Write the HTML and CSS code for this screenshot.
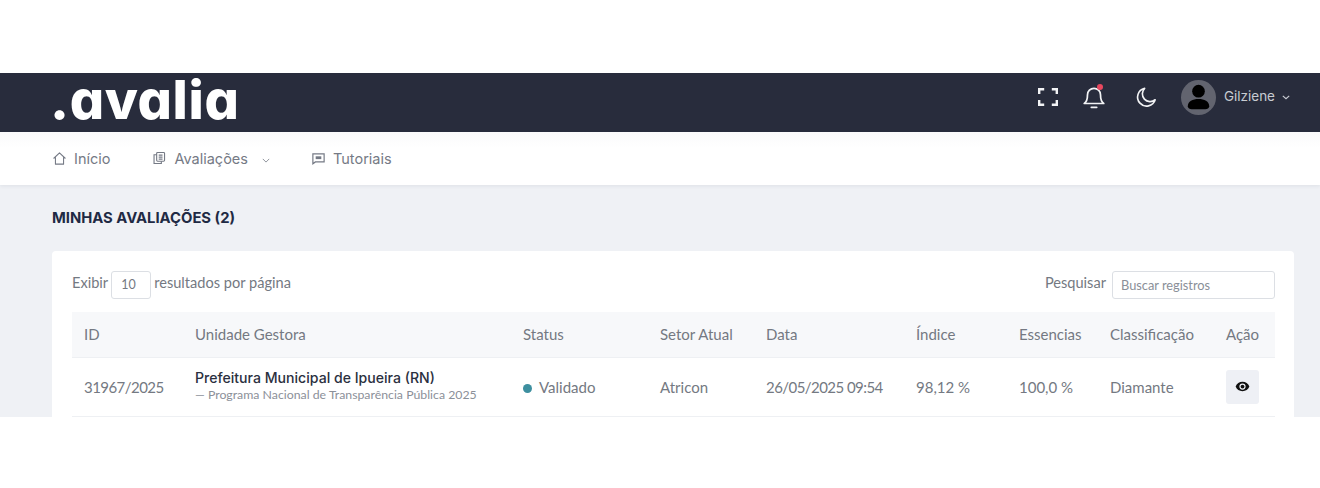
FILE: index.html
```html
<!DOCTYPE html>
<html lang="pt-BR">
<head>
    <meta charset="UTF-8">
    <title>Minhas avaliações</title>
    <link rel="stylesheet" href="styles.css">
</head>
<body>
<div class="app">
    <header class="topbar">
        <div class="logo">.avalia</div>
        <div class="topbar-right">
            <svg class="top-icon expand" viewBox="0 0 20 18" fill="none" stroke="currentColor" stroke-width="2.400"><path d="M1.200 6V1.200h5M13.800 1.200h5V6M18.800 12v4.800h-5M6.200 16.800h-5V12"/></svg>
            <span class="bell">
                <svg class="top-icon" viewBox="0 0 24 24" fill="none" stroke="currentColor" stroke-width="1.600" stroke-linecap="round" stroke-linejoin="round"><path d="M12 4a6 6 0 0 0-6 6c0 5-1.500 7-3 8h18c-1.500-1-3-3-3-8a6 6 0 0 0-6-6z"/><path d="M9.500 21.500h5"/></svg>
                <span class="bell-dot"></span>
            </span>
            <svg class="top-icon moon" viewBox="0 0 24 24" fill="none" stroke="currentColor" stroke-width="1.800" stroke-linecap="round" stroke-linejoin="round"><path d="M10.500 2.500A9.800 9.800 0 1 0 22 15a8.500 8.500 0 0 1-11.500-12.500z"/></svg>
            <div class="user">
                <span class="avatar">
                    <svg viewBox="0 0 36 36" fill="#000"><circle cx="18" cy="11.500" r="6.500"/><path d="M7 27c0-5.500 5-7.500 11-7.500s11 2 11 7.500c0 2-2 3-4 3H11c-2 0-4-1-4-3z"/></svg>
                </span>
                <span class="user-name">Gilziene</span>
                <svg class="chev-user" viewBox="0 0 10 6" fill="none" stroke="currentColor" stroke-width="1.500"><path d="M1 1l4 3.500L9 1"/></svg>
            </div>
        </div>
    </header>

    <nav class="menu">
        <a class="menu-item" href="#">
            <svg class="menu-icon" viewBox="0 0 24 24" fill="none" stroke="currentColor" stroke-width="1.700" stroke-linejoin="round"><path d="M2.500 12L12 3l9.500 9M5.500 10v11h13V10"/></svg>
            Início
        </a>
        <a class="menu-item" href="#">
            <svg class="menu-icon small" viewBox="0 0 24 24" fill="none" stroke="currentColor" stroke-width="1.900"><rect x="8" y="2.500" width="13.500" height="15" rx="1.500"/><path d="M8 6.500H3.500v15H16V17.500M11.500 7h6.500M11.500 10.500h6.500M11.500 14h6.500"/></svg>
            Avaliações
            <svg class="chev-menu" viewBox="0 0 10 6" fill="none" stroke="currentColor" stroke-width="1"><path d="M1 1l4 4 4-4"/></svg>
        </a>
        <a class="menu-item" href="#">
            <svg class="menu-icon" viewBox="0 0 24 24" fill="none" stroke="currentColor" stroke-width="1.900"><path d="M3 4.500h18v13H7l-4 3z"/><rect x="7.500" y="8.500" width="9" height="4.500" fill="currentColor" stroke="none"/></svg>
            Tutoriais
        </a>
    </nav>

    <main class="content">
        <h1 class="page-title">MINHAS AVALIAÇÕES (2)</h1>
        <section class="card">
            <div class="table-tools">
                <div class="tool-group">
                    Exibir
                    <span class="per-page">10</span>
                    resultados por página
                </div>
                <div class="tool-group">
                    Pesquisar
                    <input class="search" type="text" placeholder="Buscar registros">
                </div>
            </div>
            <table class="grid">
                <colgroup>
                    <col class="c-id"><col class="c-unit"><col class="c-status"><col class="c-sector"><col class="c-date"><col class="c-index"><col class="c-ess"><col class="c-class"><col class="c-action">
                </colgroup>
                <thead>
                    <tr>
                        <th>ID</th>
                        <th>Unidade Gestora</th>
                        <th>Status</th>
                        <th>Setor Atual</th>
                        <th>Data</th>
                        <th>Índice</th>
                        <th>Essencias</th>
                        <th>Classificação</th>
                        <th>Ação</th>
                    </tr>
                </thead>
                <tbody>
                    <tr>
                        <td class="tight">31967/2025</td>
                        <td class="unit">
                            <div class="unit-name">Prefeitura Municipal de Ipueira (RN)</div>
                            <div class="unit-sub">— Programa Nacional de Transparência Pública 2025</div>
                        </td>
                        <td><span class="dot"></span>Validado</td>
                        <td>Atricon</td>
                        <td class="tight">26/05/2025 09:54</td>
                        <td>98,12 %</td>
                        <td>100,0 %</td>
                        <td>Diamante</td>
                        <td>
                            <a class="eye-btn" href="#">
                                <svg viewBox="0 0 24 24" fill="#111"><path fill-rule="evenodd" d="M12 4.500C7 4.500 2.700 7.600 1 12c1.700 4.400 6 7.500 11 7.500s9.300-3.100 11-7.500c-1.700-4.400-6-7.500-11-7.500zm0 12.500a5 5 0 1 1 0-10 5 5 0 0 1 0 10z"/><circle cx="12" cy="12" r="3"/></svg>
                            </a>
                        </td>
                    </tr>
                </tbody>
            </table>
        </section>
    </main>
</div>
</body>
</html>
```

FILE: styles.css
```css
* {
    box-sizing: border-box;
}

body {
    margin: 0;
    padding: 73px 0 71px;
    background: #fff;
    font-family: "Inter", "Liberation Sans", sans-serif;
}

.app {
    height: 344px;
    background: #eff1f5;
}

/* barra superior */
.topbar {
    height: 59px;
    padding: 0 30px 0 52px;
    display: flex;
    align-items: center;
    justify-content: space-between;
    background: #282c3c;
    color: #fff;
}

.logo {
    margin: 0 0 5px -2px;
    font-size: 54px;
    font-weight: 800;
    line-height: 54px;
    letter-spacing: 0.6px;
    font-feature-settings: "cv11";
}

.topbar-right {
    display: flex;
    align-items: center;
    margin-bottom: 11px;
    color: #f2f3f5;
}

.top-icon {
    width: 26px;
    height: 26px;
    display: block;
}

.top-icon.expand {
    width: 20px;
    height: 18px;
}

.bell {
    position: relative;
    margin-left: 23px;
}

.bell-dot {
    position: absolute;
    top: 0;
    right: 4px;
    width: 6px;
    height: 6px;
    border-radius: 50%;
    background: #e8485f;
}

.moon {
    width: 22px;
    height: 22px;
    margin-left: 28px;
}

.user {
    margin-left: 24px;
    display: flex;
    align-items: center;
    color: #c9ccd3;
    font-size: 13.500px;
}

.avatar {
    width: 35px;
    height: 35px;
    border-radius: 50%;
    background: #62646f;
    display: block;
}

.avatar svg {
    display: block;
}

.user-name {
    margin-left: 8px;
    padding-bottom: 2px;
}

.chev-user {
    width: 8px;
    height: 5px;
    margin-left: 7px;
}

/* menu */
.menu {
    height: 53px;
    padding: 0 0 1px 52px;
    display: flex;
    align-items: center;
    background: linear-gradient(#fafafb, #fff 30%);
    box-shadow: 0 1px 4px rgba(30, 35, 60, 0.08);
}

.menu-item {
    display: flex;
    align-items: center;
    margin-right: 42px;
    color: #757a85;
    font-size: 14.500px;
    text-decoration: none;
}

.menu-icon {
    width: 15px;
    height: 15px;
    margin-right: 7px;
}

.menu-icon.small {
    width: 14px;
    height: 14px;
    margin-right: 8px;
}

.chev-menu {
    width: 8px;
    height: 5px;
    margin: 4px -1px 0 14px;
}

/* conteudo */
.content {
    padding: 24px 26px 0 52px;
}

.page-title {
    margin: 0 0 24px;
    color: #1f2a44;
    font-size: 14.800px;
    font-weight: 700;
    line-height: 18px;
}

.card {
    height: 166px;
    padding: 20px 19px 0 20px;
    border-radius: 4px 4px 0 0;
    background: #fff;
    font-family: "Lato", "Open Sans", sans-serif;
    color: #747982;
}

.table-tools {
    height: 28px;
    margin-bottom: 13px;
    display: flex;
    justify-content: space-between;
    align-items: flex-start;
    font-size: 14.600px;
}

.tool-group {
    display: flex;
    align-items: flex-start;
    gap: 3px;
    line-height: 24px;
}

.per-page {
    width: 40px;
    height: 28px;
    padding-left: 9px;
    border: 1px solid #dcdfe4;
    border-radius: 3px;
    font-size: 12.500px;
    line-height: 26px;
}

.search {
    width: 163px;
    height: 28px;
    margin-left: 3px;
    padding: 0 8px;
    border: 1px solid #dcdfe4;
    border-radius: 3px;
    font-family: inherit;
    font-size: 12.800px;
}

.search::placeholder {
    color: #8a8f98;
}

/* tabela */
.grid {
    width: 1203px;
    table-layout: fixed;
    border-collapse: collapse;
    font-size: 15px;
}

.c-id { width: 111px; }
.c-unit { width: 328px; }
.c-status { width: 137px; }
.c-sector { width: 106px; }
.c-date { width: 150px; }
.c-index { width: 103px; }
.c-ess { width: 91px; }
.c-class { width: 116px; }
.c-action { width: 61px; }

.grid th {
    height: 45px;
    padding: 0 12px;
    background: #f7f8fa;
    border-bottom: 1px solid #eef0f3;
    font-weight: 400;
    text-align: left;
    white-space: nowrap;
}

.grid td {
    height: 59px;
    padding: 0 12px;
    border-bottom: 1px solid #eef0f3;
    white-space: nowrap;
}

.grid td.tight {
    letter-spacing: -0.55px;
}

.grid td.unit {
    padding-bottom: 3px;
}

.unit-name {
    color: #2b3040;
    font-family: "Inter", sans-serif;
    font-size: 14.100px;
    font-weight: 500;
    line-height: 19px;
}

.unit-sub {
    color: #8b9099;
    font-size: 12.300px;
    line-height: 16px;
}

.dot {
    display: inline-block;
    width: 9px;
    height: 9px;
    margin-right: 7px;
    border-radius: 50%;
    background: #3d8f9f;
}

.eye-btn {
    width: 33px;
    height: 34px;
    display: flex;
    align-items: center;
    justify-content: center;
    border-radius: 3px;
    background: #eef0f5;
}

.eye-btn svg {
    width: 15px;
    height: 15px;
}
```
